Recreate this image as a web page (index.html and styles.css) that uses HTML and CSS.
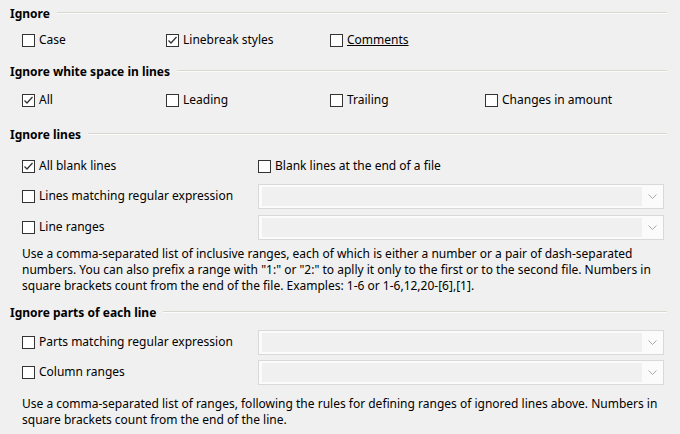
FILE: index.html
```html
<!DOCTYPE html>
<html>
<head>
<meta charset="utf-8">
<link rel="stylesheet" href="styles.css">
</head>
<body>
<div class="page">
  <div class="hdr h1"><span class="ttl">Ignore</span><span class="rule"></span></div>
  <div class="row r1 cols4">
    <label class="cb"><span class="box"></span>Case</label>
    <label class="cb"><span class="box"><svg viewBox="0 0 13 13"><polyline points="2.5,6.5 5,9 10.5,3"/></svg></span>Linebreak styles</label>
    <label class="cb"><span class="box"></span><u>Comments</u></label>
  </div>

  <div class="hdr h2"><span class="ttl">Ignore white space in lines</span><span class="rule"></span></div>
  <div class="row r2 cols4">
    <label class="cb"><span class="box"><svg viewBox="0 0 13 13"><polyline points="2.5,6.5 5,9 10.5,3"/></svg></span>All</label>
    <label class="cb"><span class="box"></span>Leading</label>
    <label class="cb"><span class="box"></span>Trailing</label>
    <label class="cb"><span class="box"></span>Changes in amount</label>
  </div>

  <div class="hdr h3"><span class="ttl">Ignore lines</span><span class="rule"></span></div>
  <div class="row r3 cols2">
    <label class="cb"><span class="box"><svg viewBox="0 0 13 13"><polyline points="2.5,6.5 5,9 10.5,3"/></svg></span>All blank lines</label>
    <label class="cb"><span class="box"></span>Blank lines at the end of a file</label>
  </div>
  <div class="row r4 cols2 combo-row">
    <label class="cb"><span class="box"></span>Lines matching regular expression</label>
    <div class="combo"><span class="field"></span><span class="arrow"><svg viewBox="0 0 9 5"><polyline points="0.5,0.5 4.5,4.5 8.5,0.5"/></svg></span></div>
  </div>
  <div class="row r5 cols2 combo-row">
    <label class="cb"><span class="box"></span>Line ranges</label>
    <div class="combo"><span class="field"></span><span class="arrow"><svg viewBox="0 0 9 5"><polyline points="0.5,0.5 4.5,4.5 8.5,0.5"/></svg></span></div>
  </div>
  <p class="note n1">Use a comma-separated list of inclusive ranges, each of which is either a number or a pair of dash-separated<br>numbers. You can also prefix a range with "1:" or "2:" to aplly it only to the first or to the second file. Numbers in<br>square brackets count from the end of the file. Examples: 1-6 or 1-6,12,20-[6],[1].</p>

  <div class="hdr h4"><span class="ttl">Ignore parts of each line</span><span class="rule"></span></div>
  <div class="row r6 cols2 combo-row">
    <label class="cb"><span class="box"></span>Parts matching regular expression</label>
    <div class="combo"><span class="field"></span><span class="arrow"><svg viewBox="0 0 9 5"><polyline points="0.5,0.5 4.5,4.5 8.5,0.5"/></svg></span></div>
  </div>
  <div class="row r7 cols2 combo-row">
    <label class="cb"><span class="box"></span>Column ranges</label>
    <div class="combo"><span class="field"></span><span class="arrow"><svg viewBox="0 0 9 5"><polyline points="0.5,0.5 4.5,4.5 8.5,0.5"/></svg></span></div>
  </div>
  <p class="note n2">Use a comma-separated list of ranges, following the rules for defining ranges of ignored lines above. Numbers in<br>square brackets count from the end of the line.</p>
</div>
</body>
</html>
```

FILE: styles.css
```css
html, body {
  margin: 0;
  padding: 0;
  background: #f0f0f0;
}
body {
  width: 680px;
  height: 434px;
  overflow: hidden;
  font-family: "Noto Sans", "Open Sans", sans-serif;
  font-size: 12px;
  color: #000;
}
.page {
  padding: 5px 13px 0 10px;
}
.hdr {
  display: flex;
  align-items: center;
  height: 16px;
}
.ttl {
  font-weight: bold;
  white-space: nowrap;
}
.rule {
  flex: 1;
  margin-left: 7px;
  margin-top: -1px;
  border-top: 1px solid #d8d8d0;
  border-bottom: 1px solid #fbfbfb;
}
.row {
  display: grid;
  align-items: center;
  height: 20px;
  padding-left: 12px;
}
.cols4 {
  grid-template-columns: 144px 164px 155px 1fr;
}
.cols2 {
  grid-template-columns: 236px 1fr;
}
.combo-row {
  height: 26px;
}
.cb {
  display: flex;
  align-items: center;
  white-space: nowrap;
  line-height: 16px;
}
.box {
  width: 11px;
  height: 11px;
  border: 1px solid #333;
  background: #fff;
  margin-right: 4px;
  display: flex;
  flex: none;
  position: relative;
}
.box svg {
  position: absolute;
  left: -1px;
  top: -1px;
  width: 13px;
  height: 13px;
}
.box polyline {
  fill: none;
  stroke: #333;
  stroke-width: 1.3;
}
.combo {
  height: 23px;
  border: 1px solid #d9d9d9;
  background: #fbfbfb;
  display: flex;
  padding: 2px 0 2px 3px;
  box-sizing: border-box;
  height: 25px;
  width: 406px;
}
.field {
  flex: 1;
  background: #f0f0f0;
}
.arrow {
  width: 21px;
  display: flex;
  align-items: center;
  justify-content: center;
}
.arrow svg {
  width: 9px;
  height: 5px;
}
.arrow polyline {
  fill: none;
  stroke: #a8a8a8;
  stroke-width: 1;
}
.note {
  margin: 0;
  padding-left: 12px;
  line-height: 16px;
  white-space: nowrap;
}
.h1 { margin-top: 0; }
.r1 { margin-top: 9px; }
.h2 { margin-top: 13px; }
.r2 { margin-top: 11px; }
.h3 { margin-top: 16px; }
.r3 { margin-top: 14px; }
.r4 { margin-top: 7px; }
.r5 { margin-top: 5px; }
.n1 { margin-top: 6px; }
.h4 { margin-top: 10px; }
.r6 { margin-top: 9px; }
.r7 { margin-top: 4px; }
.n2 { margin-top: 11px; }
```
